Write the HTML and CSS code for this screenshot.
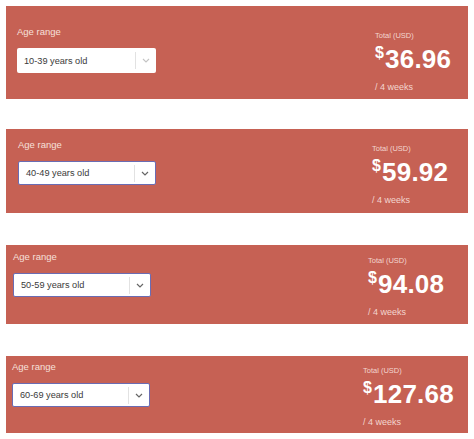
FILE: index.html
```html
<!DOCTYPE html>
<html>
<head>
<meta charset="utf-8">
<link rel="stylesheet" href="styles.css">
</head>
<body>
<div class="list">
  <section class="card card-1">
    <div class="field">
      <div class="label">Age range</div>
      <div class="select">
        <span class="value">10-39 years old</span>
        <span class="arrow"><svg width="8" height="5" viewBox="0 0 8 5"><polyline points="1,1 4,4 7,1" fill="none" stroke="#c4c4c4" stroke-width="1.1"/></svg></span>
      </div>
    </div>
    <div class="total">
      <div class="total-label">Total (USD)</div>
      <div class="price"><span class="cur">$</span>36.96</div>
      <div class="period">/ 4 weeks</div>
    </div>
  </section>

  <section class="card card-2">
    <div class="field">
      <div class="label">Age range</div>
      <div class="select focus">
        <span class="value">40-49 years old</span>
        <span class="arrow"><svg width="8" height="5" viewBox="0 0 8 5"><polyline points="1,1 4,4 7,1" fill="none" stroke="#666" stroke-width="1.2"/></svg></span>
      </div>
    </div>
    <div class="total">
      <div class="total-label">Total (USD)</div>
      <div class="price"><span class="cur">$</span>59.92</div>
      <div class="period">/ 4 weeks</div>
    </div>
  </section>

  <section class="card card-3">
    <div class="field">
      <div class="label">Age range</div>
      <div class="select focus">
        <span class="value">50-59 years old</span>
        <span class="arrow"><svg width="8" height="5" viewBox="0 0 8 5"><polyline points="1,1 4,4 7,1" fill="none" stroke="#666" stroke-width="1.2"/></svg></span>
      </div>
    </div>
    <div class="total">
      <div class="total-label">Total (USD)</div>
      <div class="price"><span class="cur">$</span>94.08</div>
      <div class="period">/ 4 weeks</div>
    </div>
  </section>

  <section class="card card-4">
    <div class="field">
      <div class="label">Age range</div>
      <div class="select focus">
        <span class="value">60-69 years old</span>
        <span class="arrow"><svg width="8" height="5" viewBox="0 0 8 5"><polyline points="1,1 4,4 7,1" fill="none" stroke="#666" stroke-width="1.2"/></svg></span>
      </div>
    </div>
    <div class="total">
      <div class="total-label">Total (USD)</div>
      <div class="price"><span class="cur">$</span>127.68</div>
      <div class="period">/ 4 weeks</div>
    </div>
  </section>
</div>
</body>
</html>
```

FILE: styles.css
```css
html, body {
  margin: 0;
  padding: 0;
  background: #ffffff;
  font-family: "Liberation Sans", Arial, Helvetica, sans-serif;
}

.list {
  display: flex;
  flex-direction: column;
  padding: 6px 6px 0 6px;
  width: 462px;
}

.card {
  background: #c66154;
  display: flex;
  align-items: flex-start;
  box-sizing: border-box;
}

.card-1 { height: 93px; padding: 20px 0 0 11px; }
.card-2 { height: 84px; padding: 10px 0 0 12px; margin-top: 30px; }
.card-3 { height: 79px; padding: 6px 0 0 7px; margin-top: 32px; }
.card-4 { height: 77px; padding: 5px 0 0 6px; margin-top: 32px; }

.field {
  display: flex;
  flex-direction: column;
}

.label {
  font-size: 9.5px;
  line-height: 12px;
  color: #f6e0db;
  height: 12px;
}

.select {
  margin-top: 10px;
  width: 139px;
  height: 25px;
  box-sizing: border-box;
  background: #ffffff;
  border-radius: 2px;
  display: flex;
  align-items: center;
}

.select.focus {
  border: 1.5px solid #6a6cb3;
  width: 138px;
  height: 24px;
}

.value {
  flex: 1;
  padding-left: 7px;
  font-size: 9.2px;
  color: #3a3a3a;
}

.arrow {
  width: 20px;
  height: 17px;
  border-left: 1px solid #e2e2e2;
  display: flex;
  align-items: center;
  justify-content: center;
}

.total {
  margin-left: auto;
  margin-top: 5px;
  display: flex;
  flex-direction: column;
  color: #ffffff;
}

.card-1 .total { width: 93px; }
.card-2 .total { width: 96px; }
.card-3 .total { width: 100px; }
.card-4 .total { width: 105px; }

.total-label {
  font-size: 7.5px;
  line-height: 10px;
  color: #f3d6d0;
}

.price {
  margin-top: 3px;
  font-size: 26px;
  line-height: 30px;
  font-weight: bold;
  letter-spacing: 0.2px;
}

.cur {
  font-size: 16px;
  line-height: 0;
  vertical-align: 10px;
  margin-right: 1px;
}

.period {
  margin-top: 7px;
  font-size: 9px;
  line-height: 12px;
  color: #f3d6d0;
}
```
